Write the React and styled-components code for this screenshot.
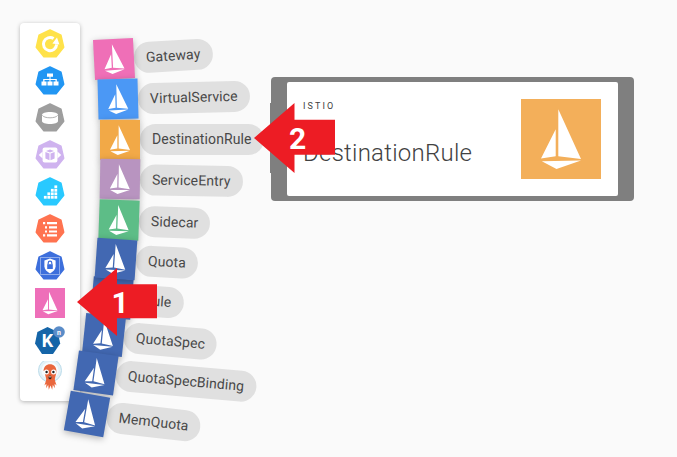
import React from "react"
import styled, { createGlobalStyle } from "styled-components"

const GlobalStyle = createGlobalStyle`
  html, body {
    margin: 0;
    padding: 0;
    background: #fafafa;
    font-family: Roboto, "Liberation Sans", sans-serif;
  }
`

const Page = styled.div`
  position: relative;
  display: flex;
  align-items: flex-start;
  width: 677px;
  height: 457px;
  padding-left: 20px;
  box-sizing: border-box;
  overflow: hidden;
  background: #fafafa;
`

const Sidebar = styled.aside`
  display: flex;
  flex-direction: column;
  align-items: center;
  gap: 7px;
  width: 60px;
  height: 378px;
  margin-top: 23px;
  padding-top: 6px;
  box-sizing: border-box;
  background: #fff;
  border-radius: 4px;
  box-shadow: 0 1px 4px rgba(0, 0, 0, 0.28);
`

const NavIcon = styled.div`
  display: flex;
  align-items: center;
  justify-content: center;
  width: 30px;
  height: 30px;
  flex: none;
`

const Tile = styled.div`
  display: flex;
  flex: none;
  width: ${(p) => p.$size}px;
  height: ${(p) => p.$size}px;
  background: ${(p) => p.$color};
  box-shadow: ${(p) => (p.$raised ? "0 2px 7px rgba(0, 0, 0, 0.28)" : "none")};
  transform: rotate(${(p) => p.$tilt || 0}deg);

  svg {
    width: 100%;
    height: 100%;
  }
`

const FanItem = styled.div`
  position: absolute;
  left: ${(p) => p.$x - 20}px;
  top: ${(p) => p.$y - 20}px;
  z-index: ${(p) => p.$layer};
  display: flex;
  align-items: center;
  transform: rotate(${(p) => p.$angle}deg);
  transform-origin: 20px 20px;
`

const Chip = styled.span`
  height: 31px;
  padding: 0 12px;
  border-radius: 16px;
  background: #e0e0e0;
  color: #484848;
  font-size: 14px;
  line-height: 31px;
  white-space: nowrap;
  letter-spacing: 0.1px;
`

const Card = styled.section`
  position: relative;
  box-sizing: border-box;
  width: 363px;
  height: 124px;
  margin: 77px 0 0 191px;
  padding: 5px 16px;
  background: #7f7f7f;
  border-radius: 4px;

  &::before {
    content: "";
    position: absolute;
    left: -1px;
    top: 26px;
    width: 2px;
    height: 70px;
    background: #7f7f7f;
  }
`

const CardBody = styled.div`
  display: flex;
  align-items: center;
  justify-content: space-between;
  box-sizing: border-box;
  height: 114px;
  padding: 0 17px 0 16px;
  background: #fff;
  border-radius: 2px;
`

const CardText = styled.div`
  display: flex;
  flex-direction: column;
  align-self: flex-start;
  gap: 26px;
  padding-top: 18px;
`

const Overline = styled.span`
  color: #424242;
  font-size: 9px;
  line-height: 12px;
  letter-spacing: 2.1px;
`

const Title = styled.span`
  color: #424242;
  font-size: 24px;
  font-weight: 300;
  line-height: 30px;
  letter-spacing: 0.25px;
`

const Callout = styled.div`
  position: absolute;
  left: ${(p) => p.$x}px;
  top: ${(p) => p.$y}px;
  z-index: 30;
  display: flex;
  align-items: center;
  justify-content: center;
  width: ${(p) => p.$w}px;
  height: ${(p) => p.$h}px;
  padding-left: 6px;
  box-sizing: border-box;
  background: #ed1c24;
  color: #fff;
  font-size: 30px;
  font-weight: 700;
  clip-path: polygon(0 50%, 50% 0, 50% 24%, 100% 24%, 100% 74%, 50% 74%, 50% 100%);
`

const Sail = () => (
  <svg viewBox="0 0 80 80">
    <path fill="#fff" d="M37.3 10.3 60 60 37.3 57.2ZM34.7 30.3V57.2L20 59.6ZM20.8 62.3 60 61.6 35.5 70Z" />
  </svg>
)

const HEPTAGON = "15,1 26,6.3 28.7,18.2 21.1,27.8 8.9,27.8 1.3,18.2 4,6.3"

const Hex = ({ color, children }) => (
  <svg width="30" height="30" viewBox="0 0 30 30">
    <polygon points={HEPTAGON} fill={color} stroke={color} strokeWidth="1.5" strokeLinejoin="round" />
    {children}
  </svg>
)

const blocks = [
  [20, 9], [20, 12.5], [16.5, 12.5], [20, 16], [16.5, 16], [13, 16],
  [20, 19.5], [16.5, 19.5], [13, 19.5], [9.5, 19.5],
]

const navIcons = [
  <Hex color="#ffe24a" key="hpa">
    <path d="M18.6 9.6A6.6 6.6 0 1 0 21.6 15.4" fill="none" stroke="#fff" strokeWidth="3" />
    <path d="M24.4 15.4 17.4 14.6 22 8.6Z" fill="#fff" />
  </Hex>,
  <Hex color="#2196f3" key="deploy">
    <path fill="#fff" d="M12 7.5h6v3.2h-2.5v2.2h6.3v2.6h1.7v4h-5v-4h2v-1.4h-5v1.4h2v4h-5v-4h2v-1.4h-5v1.4h2v4h-5v-4h1.7v-2.6h6.3v-2.2H12Z" />
  </Hex>,
  <Hex color="#9e9e9e" key="pvc">
    <path fill="#fff" d="M7 12c0-1.8 3.6-3 8-3s8 1.2 8 3v6c0 1.8-3.6 3-8 3s-8-1.2-8-3Z" />
    <path fill="none" stroke="#9e9e9e" strokeWidth="0.8" d="M7.3 12.3c.8 1.5 3.9 2.5 7.7 2.5s6.9-1 7.7-2.5" />
  </Hex>,
  <Hex color="#cfb3ef" key="pod">
    <path fill="#fff" d="M3.8 15 7.6 11.6V18.4ZM26.2 15 22.4 11.6V18.4Z" />
    <rect x="7.6" y="7.6" width="14.8" height="14.8" rx="2" fill="#fff" />
    <path fill="#cfb3ef" d="M10.4 12 14.5 13.5V20.2L10.4 18.6ZM19.6 12 15.5 13.5V20.2L19.6 18.6ZM15 9.4 19 10.9 15 12.5 11 10.9Z" />
  </Hex>,
  <Hex color="#29c9ff" key="sts">
    {blocks.map(([x, y]) => (
      <rect key={`${x}-${y}`} x={x - 0.6} y={y - 0.6} width="2.8" height="2.8" fill="#fff" />
    ))}
  </Hex>,
  <Hex color="#ff7350" key="list">
    <path fill="#fff" d="M8 8h2.2v2.2H8ZM12 8h10v2.2H12ZM10 12.2h2v2.2h-2ZM14 12.2h8v2.2h-8ZM10 16.4h2v2.2h-2ZM14 16.4h8v2.2h-8ZM8 20.2h2.2v2.2H8ZM12 20.2h10v2.2H12Z" />
  </Hex>,
  <Hex color="#3d6fdc" key="secure">
    <rect x="5.5" y="6.5" width="19" height="17" fill="none" stroke="#dfe8fb" strokeWidth="1" strokeDasharray="1 1" />
    <path fill="#fff" d="M15 7.6 20.6 9.6V15.2C20.6 18.4 18 20.8 15 22.4 12 20.8 9.4 18.4 9.4 15.2V9.6Z" />
    <rect x="12.2" y="13.2" width="5.6" height="4.8" fill="#3d6fdc" />
    <path fill="none" stroke="#3d6fdc" strokeWidth="1.2" d="M13.2 13.2v-1.2a1.8 1.8 0 0 1 3.6 0v1.2" />
  </Hex>,
  <Tile $size={30} $color="#ee6fb9" key="istio"><Sail /></Tile>,
  <svg width="30" height="30" viewBox="0 0 30 30" key="knative">
    <polygon points="12.5,2 22.8,7 25.2,18.6 18,29 7,29 0,18.6 2.4,7" fill="#1565a8" />
    <text x="12.5" y="22" textAnchor="middle" fill="#fff" fontFamily="Roboto, sans-serif" fontWeight="700" fontSize="18">K</text>
    <circle cx="24" cy="7" r="5.8" fill="#5a8cc8" />
    <text x="24" y="9.6" textAnchor="middle" fill="#fff" fontFamily="Roboto, sans-serif" fontWeight="700" fontSize="7">n</text>
  </svg>,
  <svg width="30" height="32" viewBox="0 0 30 32" key="argo">
    <circle cx="15" cy="9.5" r="11.5" fill="#e3f1f7" stroke="#bcdcea" strokeWidth="1" />
    <circle cx="15" cy="9.5" r="8.6" fill="#f6fbfd" />
    <path fill="#e9673d" d="M8.6 10c0-4.4 2.8-6.8 6.4-6.8s6.4 2.4 6.4 6.8c0 3.4-1.2 5.6-1.6 8 .1 2.4 1.2 4.4 1.8 6.6l-2-1.8.2 4.4-2-3.4-.6 5-1.7-4.2-1.7 4.2-.6-5-2 3.4.2-4.4-2 1.8c.6-2.2 1.7-4.2 1.8-6.6-.4-2.4-1.6-4.6-1.6-8Z" />
    <circle cx="11.4" cy="11" r="2.5" fill="#fff" />
    <circle cx="18.6" cy="11" r="2.5" fill="#fff" />
    <circle cx="11.6" cy="11" r="1.2" fill="#222" />
    <circle cx="18.4" cy="11" r="1.2" fill="#222" />
    <ellipse cx="15" cy="16.4" rx="1.5" ry="1.9" fill="#3a1c14" />
    <path fill="#fff" d="M13.8 15.4h2.4v.8h-2.4Z" />
  </svg>,
]

const fan = [
  { name: "Gateway", x: 114, y: 59, angle: -3.5, tilt: 0.5, color: "#ef6fb7" },
  { name: "VirtualService", x: 117.5, y: 99, angle: -1.5, tilt: 0, color: "#4b98f5" },
  { name: "DestinationRule", x: 120, y: 139.5, angle: 0, tilt: 0, color: "#f2a947" },
  { name: "ServiceEntry", x: 120, y: 179, angle: 1, tilt: 0, color: "#b894c0" },
  { name: "Sidecar", x: 118.5, y: 219.5, angle: 2, tilt: 0, color: "#5dbd87" },
  { name: "Quota", x: 116, y: 258.5, angle: 3, tilt: 1, color: "#4268b2" },
  { name: "Rule", x: 112, y: 298, angle: 4, tilt: 1, color: "#4268b2" },
  { name: "QuotaSpec", x: 104, y: 335, angle: 5, tilt: 1, color: "#4268b2" },
  { name: "QuotaSpecBinding", x: 96, y: 372.5, angle: 5, tilt: 3, color: "#4268b2" },
  { name: "MemQuota", x: 87, y: 413.5, angle: 6.5, tilt: 3.5, color: "#4268b2" },
]

const App = () => (
  <Page>
    <GlobalStyle />
    <Sidebar>
      {navIcons.map((icon) => (
        <NavIcon key={icon.key}>{icon}</NavIcon>
      ))}
    </Sidebar>

    {fan.map((item, i) => (
      <FanItem key={item.name} $x={item.x} $y={item.y} $angle={item.angle} $layer={i === 6 ? 1 : 10 + i}>
        <Tile $size={40} $color={item.color} $tilt={item.tilt} $raised>
          <Sail />
        </Tile>
        <Chip>{item.name}</Chip>
      </FanItem>
    ))}

    <Card>
      <CardBody>
        <CardText>
          <Overline>ISTIO</Overline>
          <Title>DestinationRule</Title>
        </CardText>
        <Tile $size={80} $color="#f3af5a">
          <Sail />
        </Tile>
      </CardBody>
    </Card>

    <Callout $x={77} $y={268} $w={80} $h={68}>1</Callout>
    <Callout $x={254} $y={103} $w={81} $h={70}>2</Callout>
  </Page>
)

export default App
